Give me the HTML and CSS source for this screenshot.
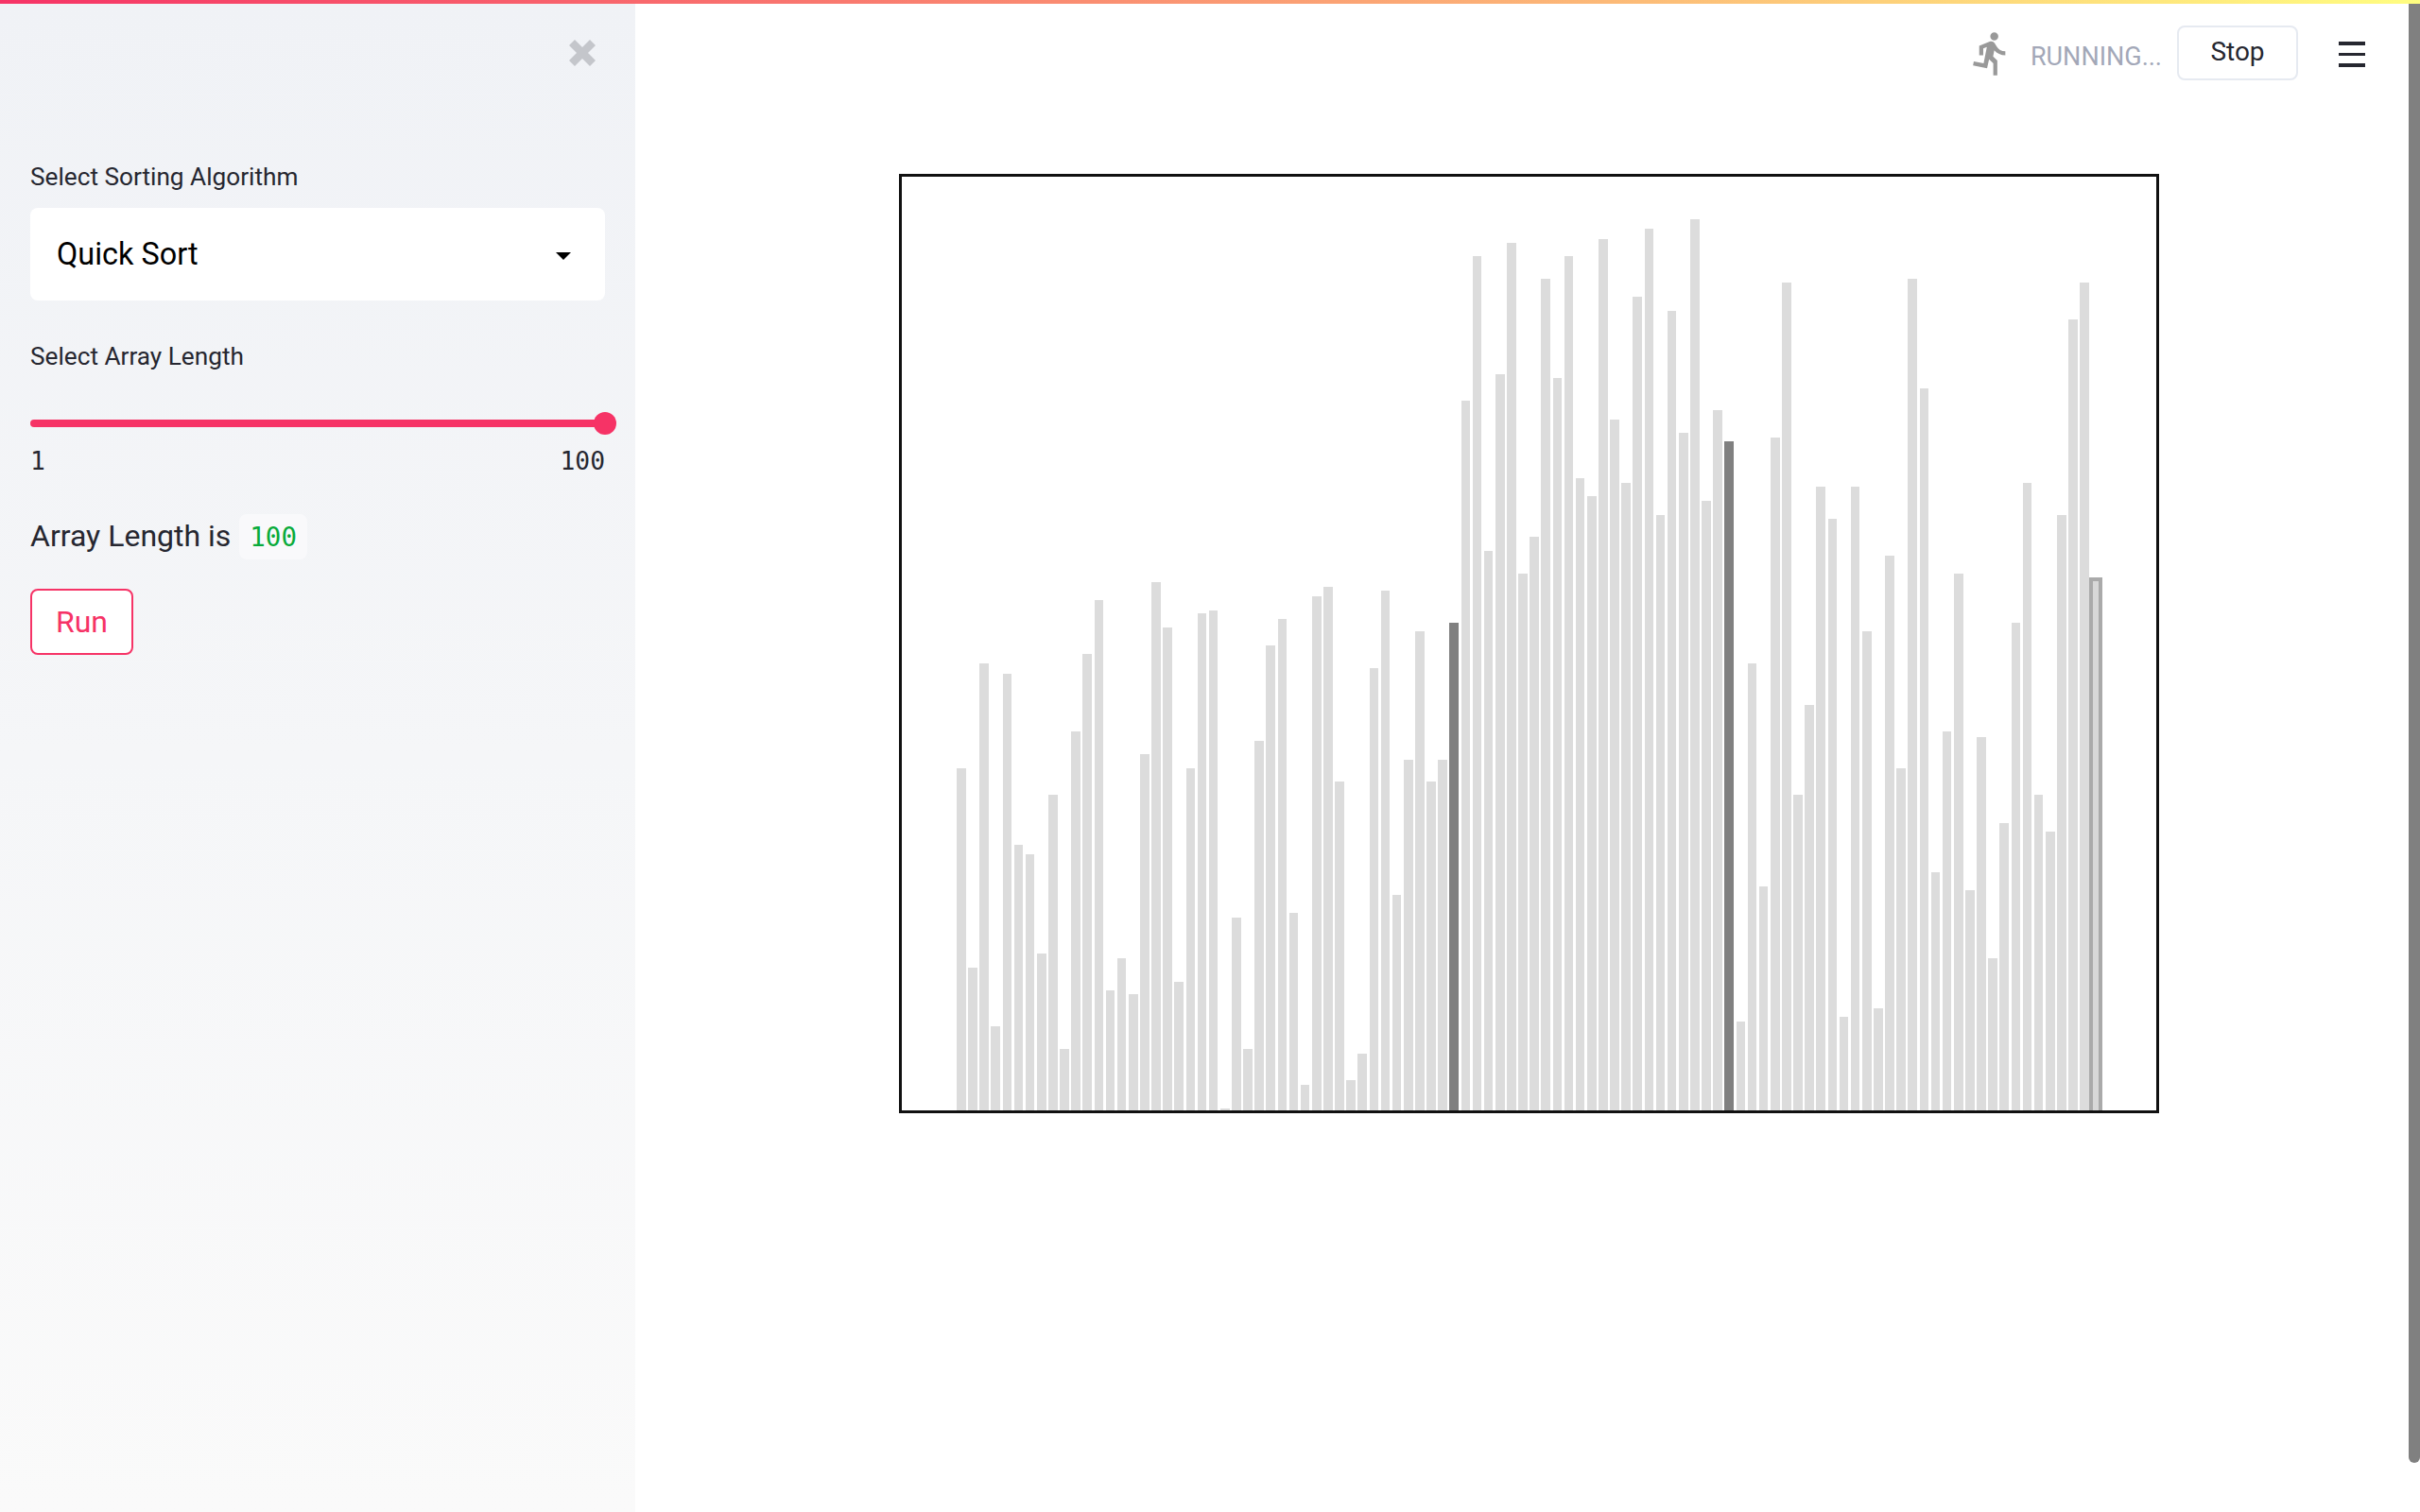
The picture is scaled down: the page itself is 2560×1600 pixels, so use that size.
FILE: index.html
```html
<!DOCTYPE html>
<html lang="en">
<head>
    <meta charset="UTF-8">
    <title>Sorting Visualizer</title>
    <link rel="stylesheet" href="styles.css">
</head>
<body>
    <div class="decoration"></div>
    <div class="app">
        <aside class="sidebar">
            <div class="sidebar-top">
                <svg class="close-icon" viewBox="0 0 28 28"><path d="M6 0l8 8 8-8 6 6-8 8 8 8-6 6-8-8-8 8-6-6 8-8-8-8z"/></svg>
            </div>

            <label class="field-label">Select Sorting Algorithm</label>
            <div class="select-box">
                <span>Quick Sort</span>
                <span class="caret"></span>
            </div>

            <label class="field-label length-label">Select Array Length</label>
            <div class="slider">
                <div class="slider-thumb"></div>
            </div>
            <div class="slider-range">
                <span>1</span>
                <span>100</span>
            </div>

            <p class="length-text">Array Length is <code>100</code></p>
            <button type="button" class="btn-run">Run</button>
        </aside>

        <main class="main">
            <header class="toolbar">
                <svg class="run-icon" viewBox="0 0 24 24"><path d="M13.49 5.48c1.1 0 2-.9 2-2s-.9-2-2-2-2 .9-2 2 .9 2 2 2zm-3.6 13.9l1-4.4 2.1 2v6h2v-7.5l-2.1-2 .6-3c1.3 1.5 3.3 2.5 5.5 2.5v-2c-1.9 0-3.5-1-4.3-2.4l-1-1.6c-.4-.6-1-1-1.7-1-.3 0-.5.1-.8.1l-5.2 2.2v4.7h2v-3.4l1.8-.7-1.6 8.1-4.9-1-.4 2 7 1.4z"/></svg>
                <span class="status">RUNNING...</span>
                <button type="button" class="btn-stop">Stop</button>
                <div class="menu-icon"><span></span><span></span><span></span></div>
            </header>

            <div class="chart">
                <div class="bar" style="height:362px"></div>
                <div class="bar" style="height:151px"></div>
                <div class="bar" style="height:473px"></div>
                <div class="bar" style="height:89px"></div>
                <div class="bar" style="height:462px"></div>
                <div class="bar" style="height:281px"></div>
                <div class="bar" style="height:271px"></div>
                <div class="bar" style="height:166px"></div>
                <div class="bar" style="height:334px"></div>
                <div class="bar" style="height:65px"></div>
                <div class="bar" style="height:401px"></div>
                <div class="bar" style="height:483px"></div>
                <div class="bar" style="height:540px"></div>
                <div class="bar" style="height:127px"></div>
                <div class="bar" style="height:161px"></div>
                <div class="bar" style="height:123px"></div>
                <div class="bar" style="height:377px"></div>
                <div class="bar" style="height:559px"></div>
                <div class="bar" style="height:511px"></div>
                <div class="bar" style="height:136px"></div>
                <div class="bar" style="height:362px"></div>
                <div class="bar" style="height:526px"></div>
                <div class="bar" style="height:529px"></div>
                <div class="bar" style="height:2px"></div>
                <div class="bar" style="height:204px"></div>
                <div class="bar" style="height:65px"></div>
                <div class="bar" style="height:391px"></div>
                <div class="bar" style="height:492px"></div>
                <div class="bar" style="height:520px"></div>
                <div class="bar" style="height:209px"></div>
                <div class="bar" style="height:27px"></div>
                <div class="bar" style="height:544px"></div>
                <div class="bar" style="height:554px"></div>
                <div class="bar" style="height:348px"></div>
                <div class="bar" style="height:32px"></div>
                <div class="bar" style="height:60px"></div>
                <div class="bar" style="height:468px"></div>
                <div class="bar" style="height:550px"></div>
                <div class="bar" style="height:228px"></div>
                <div class="bar" style="height:371px"></div>
                <div class="bar" style="height:507px"></div>
                <div class="bar" style="height:348px"></div>
                <div class="bar" style="height:371px"></div>
                <div class="bar bar-active" style="height:516px"></div>
                <div class="bar" style="height:751px"></div>
                <div class="bar" style="height:904px"></div>
                <div class="bar" style="height:592px"></div>
                <div class="bar" style="height:779px"></div>
                <div class="bar" style="height:918px"></div>
                <div class="bar" style="height:568px"></div>
                <div class="bar" style="height:607px"></div>
                <div class="bar" style="height:880px"></div>
                <div class="bar" style="height:775px"></div>
                <div class="bar" style="height:904px"></div>
                <div class="bar" style="height:669px"></div>
                <div class="bar" style="height:650px"></div>
                <div class="bar" style="height:922px"></div>
                <div class="bar" style="height:731px"></div>
                <div class="bar" style="height:664px"></div>
                <div class="bar" style="height:861px"></div>
                <div class="bar" style="height:933px"></div>
                <div class="bar" style="height:630px"></div>
                <div class="bar" style="height:846px"></div>
                <div class="bar" style="height:717px"></div>
                <div class="bar" style="height:943px"></div>
                <div class="bar" style="height:645px"></div>
                <div class="bar" style="height:741px"></div>
                <div class="bar bar-active" style="height:708px"></div>
                <div class="bar" style="height:94px"></div>
                <div class="bar" style="height:473px"></div>
                <div class="bar" style="height:237px"></div>
                <div class="bar" style="height:712px"></div>
                <div class="bar" style="height:876px"></div>
                <div class="bar" style="height:334px"></div>
                <div class="bar" style="height:429px"></div>
                <div class="bar" style="height:660px"></div>
                <div class="bar" style="height:626px"></div>
                <div class="bar" style="height:99px"></div>
                <div class="bar" style="height:660px"></div>
                <div class="bar" style="height:507px"></div>
                <div class="bar" style="height:108px"></div>
                <div class="bar" style="height:587px"></div>
                <div class="bar" style="height:362px"></div>
                <div class="bar" style="height:880px"></div>
                <div class="bar" style="height:764px"></div>
                <div class="bar" style="height:252px"></div>
                <div class="bar" style="height:401px"></div>
                <div class="bar" style="height:568px"></div>
                <div class="bar" style="height:233px"></div>
                <div class="bar" style="height:395px"></div>
                <div class="bar" style="height:161px"></div>
                <div class="bar" style="height:304px"></div>
                <div class="bar" style="height:516px"></div>
                <div class="bar" style="height:664px"></div>
                <div class="bar" style="height:334px"></div>
                <div class="bar" style="height:295px"></div>
                <div class="bar" style="height:630px"></div>
                <div class="bar" style="height:837px"></div>
                <div class="bar" style="height:876px"></div>
                <div class="bar bar-pivot" style="height:562px"></div>
            </div>
        </main>

        <div class="scrollbar"><div class="scrollbar-thumb"></div></div>
    </div>
</body>
</html>
```

FILE: styles.css
```css
* {
    margin: 0;
    padding: 0;
    box-sizing: border-box;
}

body {
    font-family: Roboto, "Open Sans", sans-serif;
    color: #262730;
    background: white;
    height: 1600px;
    overflow: hidden;
}

.decoration {
    height: 4px;
    background: linear-gradient(90deg, #f63366, #fffd80);
}

.app {
    display: flex;
    height: 1596px;
}

/* sidebar */
.sidebar {
    width: 672px;
    padding: 38px 32px 0;
    background: linear-gradient(180deg, #f0f2f6, #fafafa);
}

.sidebar-top {
    display: flex;
    justify-content: flex-end;
    padding-right: 10px;
    height: 125px;
}

.close-icon {
    width: 28px;
    height: 28px;
    fill: #c4c6cb;
}

.field-label {
    display: block;
    font-size: 26.2px;
    line-height: 40px;
    height: 53px;
}

.select-box {
    display: flex;
    align-items: center;
    justify-content: space-between;
    height: 98px;
    padding: 0 36px 0 28px;
    background: white;
    border-radius: 8px;
    color: black;
    font-size: 32.4px;
}

.caret {
    width: 0;
    height: 0;
    border-left: 8px solid transparent;
    border-right: 8px solid transparent;
    border-top: 8px solid black;
    margin-top: 4px;
}

.length-label {
    margin-top: 39px;
    height: 87px;
}

.slider {
    position: relative;
    height: 8px;
    background: #f63366;
    border-radius: 4px;
}

.slider-thumb {
    position: absolute;
    right: -12px;
    top: -8px;
    width: 24px;
    height: 24px;
    background: #f63366;
    border-radius: 50%;
}

.slider-range {
    display: flex;
    justify-content: space-between;
    margin-top: 16px;
    font-family: "DejaVu Sans Mono", monospace;
    font-size: 26.3px;
    line-height: 40px;
}

.length-text {
    margin-top: 35px;
    font-size: 32px;
    line-height: 48px;
}

.length-text code {
    display: inline-block;
    margin-left: 1px;
    padding: 0 11px;
    background: #f9f9fb;
    border-radius: 8px;
    color: #09ab3b;
    font-family: "DejaVu Sans Mono", monospace;
    font-size: 27.5px;
}

.btn-run {
    display: block;
    margin-top: 31px;
    width: 109px;
    height: 70px;
    background: white;
    border: 2px solid #f63366;
    border-radius: 8px;
    color: #f63366;
    font-family: inherit;
    font-size: 32px;
}

/* main area */
.main {
    flex: 1;
    padding-left: 279px;
}

.toolbar {
    display: flex;
    align-items: center;
    justify-content: flex-end;
    height: 60px;
    margin-top: 22px;
    padding-right: 46px;
}

.run-icon {
    width: 51px;
    height: 51px;
    fill: #999;
    margin-right: 16px;
}

.status {
    color: #a3a8b8;
    font-size: 27px;
    margin-top: 8px;
    margin-right: 16px;
}

.btn-stop {
    width: 128px;
    height: 58px;
    padding-bottom: 3px;
    background: white;
    border: 2px solid #e6eaf1;
    border-radius: 8px;
    color: #262730;
    font-family: inherit;
    font-size: 28px;
}

.menu-icon {
    display: flex;
    flex-direction: column;
    gap: 8px;
    width: 28px;
    margin-top: 3px;
    margin-left: 43px;
}

.menu-icon span {
    height: 3.5px;
    background: #262730;
}

.chart {
    display: flex;
    align-items: flex-end;
    gap: 2.44px;
    width: 1333px;
    height: 994px;
    margin-top: 98px;
    padding-left: 58px;
    border: 3px solid #111;
}

.bar {
    flex: none;
    width: 9.7px;
    background: #dcdcdc;
}

.bar-active {
    background: #808080;
}

.bar-pivot {
    background: #d8d8d8;
    border: 2px solid #aaa;
    border-bottom: 0;
    box-shadow: -2px 0 0 #aaa, 2px 0 0 #aaa, 0 -2px 0 #aaa, -2px -2px 0 #aaa, 2px -2px 0 #aaa;
}

.scrollbar {
    width: 12px;
}

.scrollbar-thumb {
    height: 1544px;
    background: #808080;
    border-radius: 0 0 6px 6px;
}
```
